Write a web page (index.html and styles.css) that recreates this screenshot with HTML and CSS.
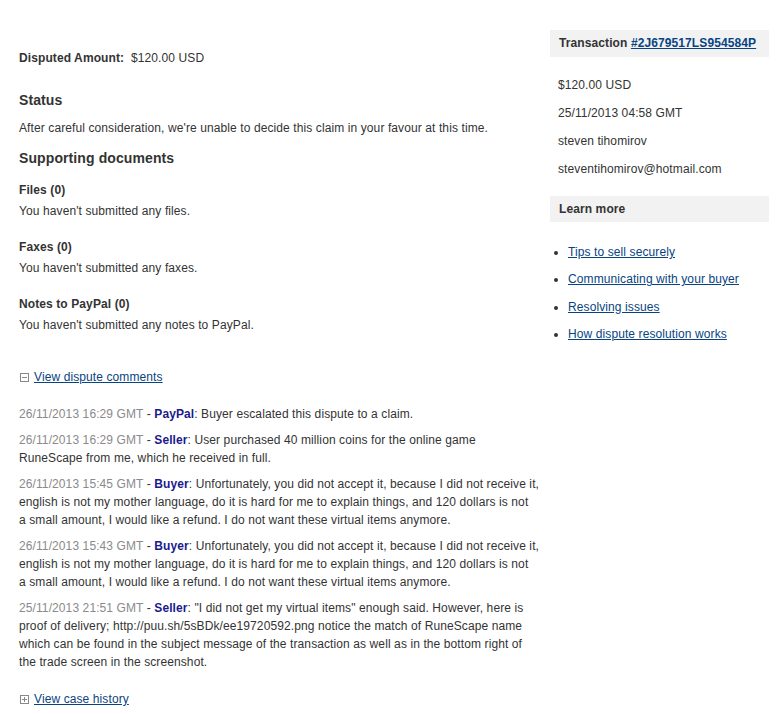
FILE: index.html
```html
<!DOCTYPE html>
<html>
<head>
<meta charset="utf-8">
<link rel="stylesheet" href="styles.css">
</head>
<body>
<div class="page">
  <div class="main">
    <div class="amount"><span class="label">Disputed Amount:</span>&nbsp; $120.00 USD</div>
    <h3 class="h-status">Status</h3>
    <p class="status-text">After careful consideration, we're unable to decide this claim in your favour at this time.</p>
    <h3 class="h-docs">Supporting documents</h3>
    <div class="doc first">
      <div class="doc-title">Files (0)</div>
      <div class="doc-text">You haven't submitted any files.</div>
    </div>
    <div class="doc">
      <div class="doc-title">Faxes (0)</div>
      <div class="doc-text">You haven't submitted any faxes.</div>
    </div>
    <div class="doc">
      <div class="doc-title">Notes to PayPal (0)</div>
      <div class="doc-text">You haven't submitted any notes to PayPal.</div>
    </div>
    <div class="toggle toggle-comments"><span class="box minus"></span><a href="#">View dispute comments</a></div>
    <div class="comments">
      <p class="comment"><span class="time">26/11/2013 16:29 GMT</span> - <b class="who">PayPal</b>: Buyer escalated this dispute to a claim.</p>
      <p class="comment"><span class="time">26/11/2013 16:29 GMT</span> - <b class="who">Seller</b>: User purchased 40 million coins for the online game RuneScape from me, which he received in full.</p>
      <p class="comment"><span class="time">26/11/2013 15:45 GMT</span> - <b class="who">Buyer</b>: Unfortunately, you did not accept it, because I did not receive it, english is not my mother language, do it is hard for me to explain things, and 120 dollars is not a&nbsp;small amount, I would like a refund. I do not want these virtual items anymore.</p>
      <p class="comment"><span class="time">26/11/2013 15:43 GMT</span> - <b class="who">Buyer</b>: Unfortunately, you did not accept it, because I did not receive it, english is not my mother language, do it is hard for me to explain things, and 120 dollars is not a&nbsp;small amount, I would like a refund. I do not want these virtual items anymore.</p>
      <p class="comment"><span class="time">25/11/2013 21:51 GMT</span> - <b class="who">Seller</b>: "I did not get my virtual items" enough said. However, here is proof of delivery; http://puu.sh/5sBDk/ee19720592.png notice the match of RuneScape name which can be found in the subject message of the transaction as well as in the bottom right of the trade screen in the screenshot.</p>
    </div>
    <div class="toggle toggle-history"><span class="box plus"></span><a href="#">View case history</a></div>
  </div>
  <div class="side">
    <div class="side-head">Transaction <a href="#">#2J679517LS954584P</a></div>
    <div class="side-info">
      <p>$120.00 USD</p>
      <p>25/11/2013 04:58 GMT</p>
      <p>steven tihomirov</p>
      <p>steventihomirov@hotmail.com</p>
    </div>
    <div class="side-head learn">Learn more</div>
    <ul class="links">
      <li><a href="#">Tips to sell securely</a></li>
      <li><a href="#">Communicating with your buyer</a></li>
      <li><a href="#">Resolving issues</a></li>
      <li><a href="#">How dispute resolution works</a></li>
    </ul>
  </div>
</div>
</body>
</html>
```
FILE: styles.css
```css
html, body {
  margin: 0;
  padding: 0;
  background: #fff;
}
body {
  font-family: Arial, "Liberation Sans", sans-serif;
  font-size: 12px;
  line-height: 18px;
  letter-spacing: 0.1px;
  color: #333;
}
a {
  color: #084482;
  text-decoration: underline;
}
p, h3, ul {
  margin: 0;
  padding: 0;
}
.page {
  display: flex;
  gap: 10px;
  padding: 30px 10px 0 19px;
}
.main {
  width: 521px;
  flex: none;
}
.side {
  width: 219px;
  flex: none;
}
.amount {
  margin-top: 19px;
}
.label {
  font-weight: bold;
}
h3 {
  font-size: 14px;
  font-weight: bold;
  line-height: 18px;
}
.h-status {
  margin-top: 24px;
}
.status-text {
  margin-top: 10px;
}
.h-docs {
  margin-top: 12px;
}
.doc {
  margin-top: 18px;
}
.doc.first {
  margin-top: 14px;
}
.doc-title {
  font-weight: bold;
}
.doc-text {
  margin-top: 3px;
}
.toggle {
  display: flex;
  align-items: center;
}
.toggle-comments {
  margin-top: 34px;
}
.toggle-history {
  margin-top: 19px;
}
.box {
  position: relative;
  width: 7px;
  height: 7px;
  border: 1px solid #888;
  margin: 0 5px 0 1px;
  flex: none;
}
.box::before {
  content: "";
  position: absolute;
  left: 1px;
  top: 3px;
  width: 5px;
  height: 1px;
  background: #888;
}
.box.plus::after {
  content: "";
  position: absolute;
  left: 3px;
  top: 1px;
  width: 1px;
  height: 5px;
  background: #888;
}
.comments {
  margin-top: 19px;
}
.comment {
  margin-bottom: 8px;
}
.comment:last-child {
  margin-bottom: 0;
}
.time {
  color: #8a8a8a;
}
.who {
  color: #1a1a8e;
}
.side-head {
  background: #f2f2f2;
  height: 27px;
  line-height: 27px;
  padding: 0 9px;
  font-weight: bold;
}
.side-head a {
  color: #084482;
}
.side-info {
  padding: 0 8px;
  margin-top: 19px;
}
.side-info p {
  margin-bottom: 10px;
}
.side-info p:last-child {
  margin-bottom: 0;
}
.side-head.learn {
  margin-top: 18px;
  height: 26px;
  line-height: 27px;
}
.links {
  margin-top: 21px;
  padding-left: 18px;
  list-style: disc;
}
.links li {
  margin-bottom: 9.3px;
}
```
